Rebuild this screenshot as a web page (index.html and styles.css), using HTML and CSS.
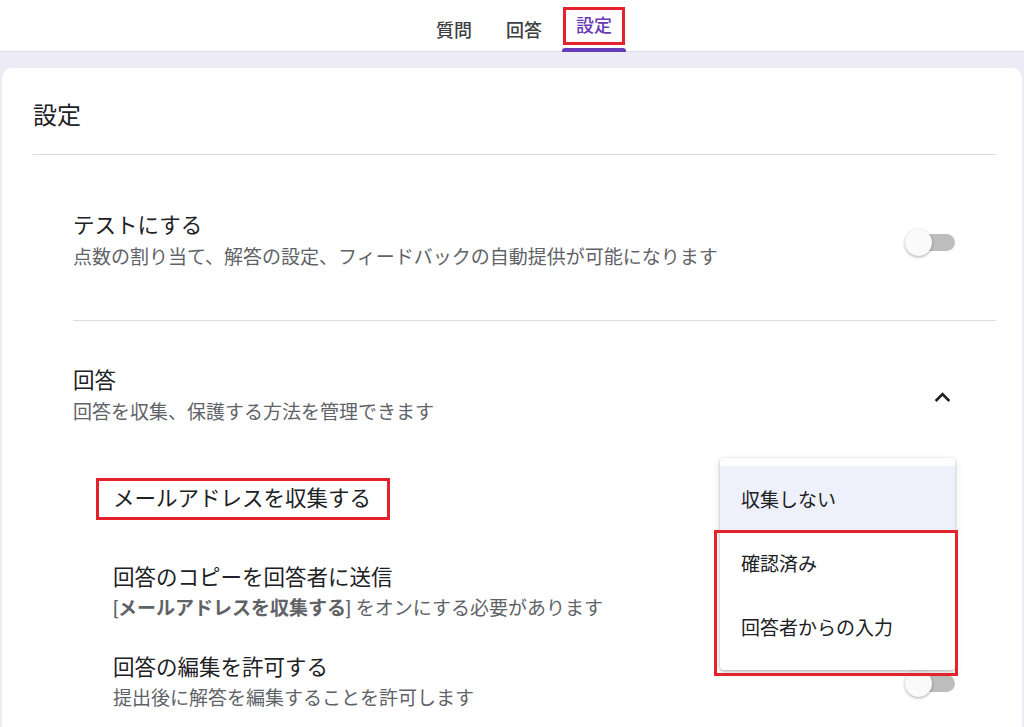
FILE: index.html
```html
<!DOCTYPE html>
<html lang="ja">
<head>
    <meta charset="UTF-8">
    <meta name="viewport" content="width=device-width, initial-scale=1.0">
    <title>設定</title>
    <link rel="stylesheet" href="styles.css">
</head>
<body>

<div class="tabs">
    <div class="tab">質問</div>
    <div class="tab">回答</div>
    <div class="tab active"><span class="mark">設定</span></div>
</div>

<div class="card">
    <h2 class="card-title">設定</h2>

    <div class="section">
        <div class="row">
            <div class="text">
                <div class="title">テストにする</div>
                <div class="desc">点数の割り当て、解答の設定、フィードバックの自動提供が可能になります</div>
            </div>
            <div class="toggle"><span class="track"></span><span class="thumb"></span></div>
        </div>
    </div>

    <div class="section no-line">
        <div class="row">
            <div class="text">
                <div class="title">回答</div>
                <div class="desc">回答を収集、保護する方法を管理できます</div>
            </div>
            <svg class="chevron" viewBox="0 0 24 24" width="31" height="31">
                <path d="M12 8l-6 6 1.41 1.41L12 10.83l4.59 4.58L18 14z" fill="#202124"/>
            </svg>
        </div>

        <div class="sub">
            <div class="email-row">
                <span class="mark email-label">メールアドレスを収集する</span>

                <div class="menu">
                    <div class="menu-item selected">収集しない</div>
                    <div class="menu-item">確認済み</div>
                    <div class="menu-item">回答者からの入力</div>
                    <div class="menu-mark"></div>
                </div>
            </div>

            <div class="row sub-row">
                <div class="text">
                    <div class="title">回答のコピーを回答者に送信</div>
                    <div class="desc">[<b>メールアドレスを収集する</b>] をオンにする必要があります</div>
                </div>
            </div>

            <div class="row sub-row last">
                <div class="text">
                    <div class="title">回答の編集を許可する</div>
                    <div class="desc">提出後に解答を編集することを許可します</div>
                </div>
                <div class="toggle"><span class="track"></span><span class="thumb"></span></div>
            </div>
        </div>
    </div>
</div>

</body>
</html>
```

FILE: styles.css
```css
/* Base */
body {
    margin: 0;
    font-family: Roboto, "Noto Sans CJK JP", sans-serif;
    color: #202124;
    background-color: #ecebf6;
    overflow: hidden;
}

/* Tabs */
.tabs {
    display: flex;
    justify-content: center;
    gap: 6px;
    height: 52px;
    padding-left: 24px;
    background-color: #fff;
    border-bottom: 1px solid #dcdbe4;
    box-sizing: border-box;
}
.tab {
    position: relative;
    width: 64px;
    display: flex;
    align-items: center;
    justify-content: center;
    padding-top: 6px;
    font-size: 18px;
    font-weight: 500;
    color: #3c4043;
}
.tab.active {
    color: #673ab7;
}
.tab.active::after {
    content: "";
    position: absolute;
    left: 0;
    right: 0;
    bottom: -1px;
    height: 4px;
    border-radius: 3px 3px 0 0;
    background-color: #673ab7;
}
.mark {
    border: 3px solid #e3222b;
}
.tab .mark {
    padding: 3px 10px 3px;
    line-height: 26px;
    margin-top: -6px;
}

/* Card */
.card {
    margin: 16px 2px 0 2px;
    padding: 0 26px 0 31px;
    background-color: #fff;
    border-radius: 10px 10px 0 0;
    height: 659px;
    box-sizing: border-box;
    overflow: hidden;
}
.card-title {
    margin: 0;
    padding: 32px 0 22px;
    font-size: 24px;
    font-weight: 400;
    line-height: 32px;
    border-bottom: 1px solid #dadce0;
}
.section {
    margin-left: 40px;
    padding: 57px 41px 48px 0;
    border-bottom: 1px solid #dadce0;
}
.section.no-line {
    padding-top: 46px;
    padding-bottom: 0;
    border-bottom: none;
}
.row {
    display: flex;
    align-items: center;
    justify-content: space-between;
}
.title {
    font-size: 21.5px;
    line-height: 28px;
}
.desc {
    margin-top: 4px;
    font-size: 19px;
    line-height: 28px;
    color: #5f6368;
}
.desc b {
    font-weight: 700;
}
.chevron {
    margin-right: -3px;
}

/* Toggle */
.toggle {
    position: relative;
    width: 50px;
    height: 27px;
    flex-shrink: 0;
}
.toggle .track {
    position: absolute;
    right: 0;
    top: 5px;
    width: 44px;
    height: 17px;
    border-radius: 9px;
    background-color: #bdbdbd;
}
.toggle .thumb {
    position: absolute;
    left: 0;
    top: 0;
    width: 27px;
    height: 27px;
    border-radius: 50%;
    background-color: #fafafa;
    box-shadow: 0 1px 3px rgba(0, 0, 0, 0.35);
}

/* Sub options */
.sub {
    padding-left: 40px;
}
.email-row {
    position: relative;
    margin-top: 51px;
}
.email-label {
    display: inline-block;
    margin-left: -17px;
    padding: 4px 16px 4px 14px;
    font-size: 21.5px;
    line-height: 28px;
}
.sub-row {
    margin-top: 44px;
}
.sub-row .desc {
    margin-top: 3px;
}
.sub-row.last {
    margin-top: 31px;
}

/* Dropdown */
.menu {
    position: absolute;
    top: -20px;
    right: 0;
    width: 235px;
    padding: 8px 0 12px;
    background-color: #fff;
    border-radius: 4px;
    box-shadow: 0 1px 3px rgba(0, 0, 0, 0.25), 0 3px 8px rgba(0, 0, 0, 0.12);
    z-index: 2;
}
.menu-item {
    height: 64px;
    display: flex;
    align-items: center;
    padding-left: 21px;
    font-size: 19px;
}
.menu-item.selected {
    background-color: #eef1fb;
}
.menu-mark {
    position: absolute;
    left: -6px;
    right: -3px;
    top: 72px;
    bottom: -6px;
    border: 3px solid #e3222b;
}
```
